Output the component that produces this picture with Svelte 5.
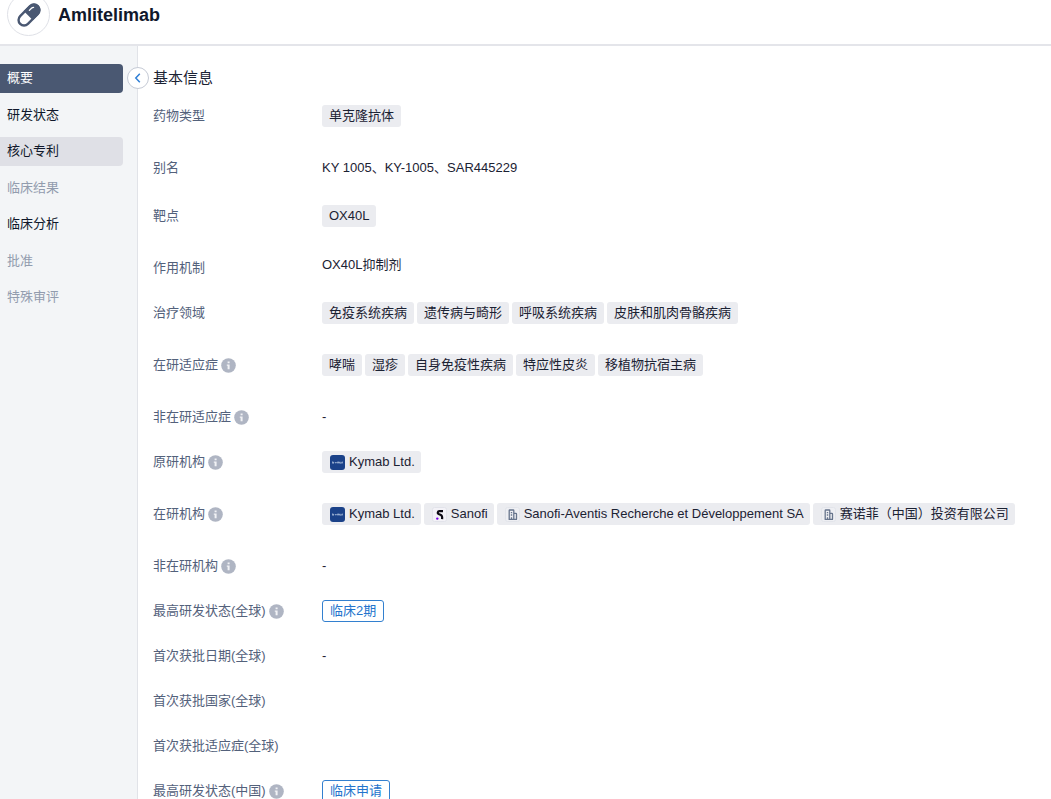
<script lang="ts">
  type Org = { name: string; logo: 'kymab' | 'sanofi' | 'building' };
  type Row = {
    label: string;
    info?: boolean;
    tags?: string[];
    orgs?: Org[];
    text?: string;
    link?: string;
    phase?: string;
    size?: 'medium' | 'large';
  };

  const nav = [
    { label: '概要', state: 'active' },
    { label: '研发状态', state: '' },
    { label: '核心专利', state: 'hover' },
    { label: '临床结果', state: 'disabled' },
    { label: '临床分析', state: '' },
    { label: '批准', state: 'disabled' },
    { label: '特殊审评', state: 'disabled' },
  ];

  const kymab: Org = { name: 'Kymab Ltd.', logo: 'kymab' };

  const rows: Row[] = [
    { label: '药物类型', tags: ['单克隆抗体'], size: 'large' },
    { label: '别名', text: 'KY 1005、KY-1005、SAR445229', size: 'medium' },
    { label: '靶点', tags: ['OX40L'], size: 'large' },
    { label: '作用机制', link: 'OX40L抑制剂' },
    { label: '治疗领域', tags: ['免疫系统疾病', '遗传病与畸形', '呼吸系统疾病', '皮肤和肌肉骨骼疾病'], size: 'large' },
    { label: '在研适应症', info: true, tags: ['哮喘', '湿疹', '自身免疫性疾病', '特应性皮炎', '移植物抗宿主病'], size: 'large' },
    { label: '非在研适应症', info: true, text: '-' },
    { label: '原研机构', info: true, orgs: [kymab], size: 'large' },
    {
      label: '在研机构',
      info: true,
      orgs: [
        kymab,
        { name: 'Sanofi', logo: 'sanofi' },
        { name: 'Sanofi-Aventis Recherche et Développement SA', logo: 'building' },
        { name: '赛诺菲（中国）投资有限公司', logo: 'building' },
      ],
      size: 'large',
    },
    { label: '非在研机构', info: true, text: '-' },
    { label: '最高研发状态(全球)', info: true, phase: '临床2期' },
    { label: '首次获批日期(全球)', text: '-' },
    { label: '首次获批国家(全球)' },
    { label: '首次获批适应症(全球)' },
    { label: '最高研发状态(中国)', info: true, phase: '临床申请' },
  ];
</script>

{#snippet logo(kind: Org['logo'])}
  {#if kind === 'kymab'}
    <svg class="logo" viewBox="0 0 15 15" aria-hidden="true">
      <rect width="15" height="15" rx="3" fill="#1b4289" />
      <path d="M2.5 6.5v2M4 7l-1 .7 1 .8M5 7l.7 1.2L6.5 7M7.3 8.4V7.1h2.2v1.3M8.4 7.1v1.3M10.3 8.3h1v-1h-1M12.4 6.6v1.8" fill="none" stroke="#c3d2ea" stroke-width=".7" />
    </svg>
  {:else if kind === 'sanofi'}
    <svg class="logo" viewBox="0 0 15 15" aria-hidden="true">
      <rect x=".5" y=".5" width="14" height="14" rx="2" fill="#f3f2f7" stroke="#e2e3ea" />
      <path d="M11 4.2H7.4c-1.8 0-2.3 2.2-.7 2.9l2.2.8c1.4.6 1.5 1.9 1.2 4.3" fill="none" stroke="#0b0912" stroke-width="2.2" />
      <circle cx="5.3" cy="11.6" r="1.2" fill="#7a00e6" />
    </svg>
  {:else}
    <svg class="logo" viewBox="0 0 15 15" aria-hidden="true">
      <rect x=".5" y=".5" width="14" height="14" rx="2" fill="#eeeff3" stroke="#e2e4ea" />
      <path d="M4.2 12.2V3.6q0-.6.6-.6h3.4q.6 0 .6.6v8.600M8.800 6.400h2.100q.6 0 .6.6v5.200M3.600 12.400h8.400M5.800 5.600h1.400M5.800 8h1.400M6.500 12v-1.800" fill="none" stroke="#66748c" stroke-width="1.3" />
    </svg>
  {/if}
{/snippet}

<div class="page">
  <header class="header">
    <span class="avatar">
      <svg viewBox="0 0 24 24" width="24" height="24" aria-hidden="true">
        <g transform="rotate(-45 12 12)">
          <rect x="-.5" y="6.5" width="25" height="11" rx="5.5" fill="#fff" stroke="#4a5872" stroke-width="2.4" />
          <path d="M11 5.500h8a6.500 6.500 0 0 1 0 13h-8z" fill="#4a5872" />
          <path d="M15.500 9h3c1 0 1.600.2 2.200.8" fill="none" stroke="#fff" stroke-width="1.300" stroke-linecap="round" />
        </g>
      </svg>
    </span>
    <h1>Amlitelimab</h1>
  </header>

  <div class="layout">
    <aside class="sidebar">
      <nav>
        {#each nav as item}
          <a href="#{item.label}" class="nav-item {item.state}" aria-disabled={item.state === 'disabled'}>{item.label}</a>
        {/each}
      </nav>
      <button type="button" class="collapse" aria-label="收起">
        <svg viewBox="0 0 10 10" width="10" height="10" aria-hidden="true">
          <path d="M6.8.8 2.8 5l4 4.2" fill="none" stroke="#2f7fd6" stroke-width="1.5" />
        </svg>
      </button>
    </aside>

    <main class="content">
      <h2>基本信息</h2>
      <dl>
        {#each rows as row}
          <div class="row {row.size ?? ''}">
            <dt>
              {row.label}
              {#if row.info}
                <svg class="info" viewBox="0 0 15 15" aria-hidden="true">
                  <circle cx="7.5" cy="7.5" r="7.3" fill="#afb5c3" />
                  <path d="M6.6 3.5h2v1.8h-2zM5.8 6.4h2.8v4.9h-2V7.8h-.8z" fill="#f1f2f5" />
                </svg>
              {/if}
            </dt>
            <dd>
              {#each row.tags ?? [] as tag}
                <span class="tag">{tag}</span>
              {/each}
              {#each row.orgs ?? [] as org}
                <a class="tag org" href="#{org.name}">{@render logo(org.logo)}{org.name}</a>
              {/each}
              {#if row.text}<span>{row.text}</span>{/if}
              {#if row.link}<a class="plain" href="#{row.link}">{row.link}</a>{/if}
              {#if row.phase}<span class="phase">{row.phase}</span>{/if}
            </dd>
          </div>
        {/each}
      </dl>
    </main>
  </div>
</div>

<style>
  :global(body) {
    background: #fff;
  }

  .page {
    height: 100vh;
    overflow: hidden;
    display: flex;
    flex-direction: column;
    font: 13px/20px 'Liberation Sans', 'Noto Sans CJK SC', sans-serif;
    color: #1b2233;
  }

  a {
    color: inherit;
    text-decoration: none;
  }

  .header {
    display: flex;
    flex-shrink: 0;
    align-items: center;
    gap: 8px;
    margin-top: -15px;
    padding: 8px 7px;
    border-bottom: 2px solid #e4e5ea;
  }

  .avatar {
    display: flex;
    align-items: center;
    justify-content: center;
    box-sizing: border-box;
    width: 43px;
    height: 43px;
    border: 1px solid #dfe1e7;
    border-radius: 50%;
  }

  h1 {
    margin: 0;
    font-size: 18px;
    line-height: 24px;
    color: #10182b;
  }

  .layout {
    display: flex;
    flex: 1;
    min-height: 0;
  }

  .sidebar {
    position: relative;
    flex: 0 0 137px;
    border-right: 1px solid #e1e3e8;
    background: #f3f5f7;
  }

  nav {
    display: flex;
    flex-direction: column;
    justify-content: space-between;
    min-height: 248px;
    padding: 18px 14px 0 0;
  }

  .nav-item {
    padding: 4px 7px 5px;
    border-radius: 0 4px 4px 0;
    color: #10182b;
  }

  .nav-item.active {
    background: #4a5872;
    color: #fff;
  }

  .nav-item.hover {
    background: #dfe0e6;
  }

  .nav-item.disabled {
    color: #929cae;
  }

  .collapse {
    position: absolute;
    top: 21px;
    right: -12px;
    display: flex;
    align-items: center;
    justify-content: center;
    width: 22px;
    height: 22px;
    padding: 0;
    border: 1px solid #c5cad5;
    border-radius: 50%;
    background: #fff;
  }

  .content {
    flex: 1;
    min-width: 0;
    padding: 20px 16px 0 15px;
  }

  h2 {
    margin: 0 0 14px;
    font-size: 15px;
    line-height: 24px;
    font-weight: 400;
  }

  dl {
    margin: 0;
  }

  .row {
    display: grid;
    grid-template-columns: 169px 1fr;
    align-items: start;
    min-height: 45px;
  }

  .row.medium {
    min-height: 48px;
  }

  .row.large {
    min-height: 52px;
  }

  dt {
    display: flex;
    align-items: center;
    gap: 3px;
    line-height: 24px;
    color: #53617b;
  }

  dd {
    display: flex;
    flex-wrap: wrap;
    gap: 3px;
    margin: 0;
    line-height: 24px;
  }

  .info {
    width: 15px;
    height: 15px;
  }

  .tag {
    margin-top: 1px;
    padding: 0 7px;
    border-radius: 3px;
    background: #ebecf0;
    line-height: 22px;
  }

  .org {
    display: flex;
    align-items: center;
    gap: 4px;
    padding: 0 6px 0 8px;
  }

  .logo {
    width: 15px;
    height: 15px;
  }

  .plain {
    line-height: 18px;
  }

  .phase {
    margin-top: 1px;
    padding: 0 7px;
    border: 1px solid #3380cf;
    border-radius: 3px;
    line-height: 20px;
    color: #2474cc;
  }
</style>
